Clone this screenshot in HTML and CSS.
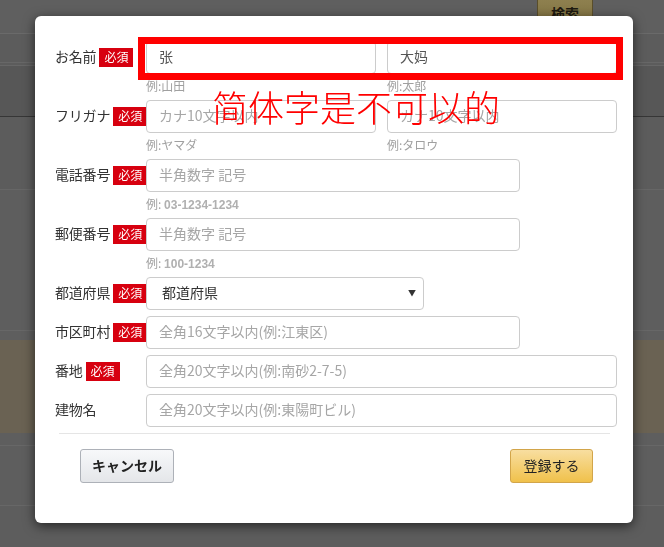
FILE: index.html
```html
<!DOCTYPE html>
<html lang="ja">
<head>
<meta charset="utf-8">
<title>住所登録</title>
<link rel="stylesheet" href="styles.css">
</head>
<body>
<div class="page">
  <div class="page-header"><span class="search-btn">検索</span></div>
  <div class="band b1"></div>
  <div class="band b2"></div>
  <div class="band b3"></div>
  <div class="band b4"></div>
  <div class="band b5"></div>
  <div class="band b6"></div>
  <div class="band b7"></div>
  <div class="band b8"></div>
  <div class="band b9"></div>
  <div class="band b10"></div>
</div>

<div class="backdrop">
  <div class="dialog">
    <div class="form">
      <div class="row">
        <div class="label"><span class="label-text">お名前</span><span class="req">必須</span></div>
        <div class="pair">
          <div class="col">
            <input class="input" type="text" value="张">
            <div class="hint">例:山田</div>
          </div>
          <div class="col">
            <input class="input" type="text" value="大妈">
            <div class="hint">例:太郎</div>
          </div>
        </div>
      </div>

      <div class="row">
        <div class="label"><span class="label-text">フリガナ</span><span class="req">必須</span></div>
        <div class="pair">
          <div class="col">
            <input class="input" type="text" placeholder="カナ10文字以内">
            <div class="hint">例:ヤマダ</div>
          </div>
          <div class="col">
            <input class="input" type="text" placeholder="カナ10文字以内">
            <div class="hint">例:タロウ</div>
          </div>
        </div>
      </div>

      <div class="row">
        <div class="label"><span class="label-text">電話番号</span><span class="req">必須</span></div>
        <div class="col">
          <input class="input w-md" type="text" placeholder="半角数字 記号">
          <div class="hint">例: <span class="num">03-1234-1234</span></div>
        </div>
      </div>

      <div class="row">
        <div class="label"><span class="label-text">郵便番号</span><span class="req">必須</span></div>
        <div class="col">
          <input class="input w-md" type="text" placeholder="半角数字 記号">
          <div class="hint">例: <span class="num">100-1234</span></div>
        </div>
      </div>

      <div class="row">
        <div class="label"><span class="label-text">都道府県</span><span class="req">必須</span></div>
        <div class="select-wrap">
          <select class="select">
            <option>都道府県</option>
          </select>
        </div>
      </div>

      <div class="row">
        <div class="label"><span class="label-text">市区町村</span><span class="req">必須</span></div>
        <input class="input w-md" type="text" placeholder="全角16文字以内(例:江東区)">
      </div>

      <div class="row">
        <div class="label"><span class="label-text">番地</span><span class="req">必須</span></div>
        <input class="input" type="text" placeholder="全角20文字以内(例:南砂2-7-5)">
      </div>

      <div class="row">
        <div class="label"><span class="label-text">建物名</span></div>
        <input class="input" type="text" placeholder="全角20文字以内(例:東陽町ビル)">
      </div>
    </div>

    <div class="divider"></div>

    <div class="footer">
      <button class="btn btn-cancel" type="button">キャンセル</button>
      <button class="btn btn-primary" type="button">登録する</button>
    </div>

    <div class="mark-box"></div>
    <div class="mark-text">简体字是不可以的</div>
  </div>
</div>
</body>
</html>
```

FILE: styles.css
```css
* {
  box-sizing: border-box;
}

html, body {
  margin: 0;
  padding: 0;
}

body {
  width: 664px;
  height: 547px;
  overflow: hidden;
  background: #5d5d5d;
  font-family: "Noto Sans CJK JP", "Noto Sans", sans-serif;
  font-size: 14px;
  color: #333;
}

/* ---------- dimmed page behind the modal ---------- */
.page {
  width: 664px;
}

.page-header {
  height: 34px;
  background: #5f5f5f;
  border-bottom: 1px solid #6a6a6a;
  display: flex;
  justify-content: flex-end;
  padding-right: 71px;
}

.search-btn {
  display: block;
  width: 56px;
  height: 32px;
  margin-top: -3px;
  background: linear-gradient(#8f8150, #7f703f);
  border: 1px solid #5a4e2a;
  border-radius: 3px;
  color: #1e1a10;
  font-weight: bold;
  font-size: 14px;
  line-height: 30px;
  text-align: center;
}

.band {
  background: #5c5c5c;
}

.b1 { height: 29px; border-bottom: 1px solid #676767; }
.b2 { height: 3px; border-bottom: 1px solid #676767; }
.b3 { height: 51px; background: #575757; border-bottom: 1px solid #363636; }
.b4 { height: 73px; border-bottom: 1px solid #666; }
.b5 { height: 141px; background: #5e5e5e; border-bottom: 1px solid #676767; }
.b6 { height: 9px; background: #5e5e5e; }
.b7 { height: 93px; background: #6a6253; }
.b8 { height: 13px; background: #5e5e5e; border-bottom: 1px solid #676767; }
.b9 { height: 60px; background: #5e5e5e; border-bottom: 1px solid #676767; }
.b10 { height: 60px; background: #5d5d5d; }

/* ---------- modal ---------- */
.backdrop {
  position: fixed;
  inset: 0;
  padding: 16px 0 0 35px;
}

.dialog {
  position: relative;
  width: 598px;
  background: #fff;
  border-radius: 6px;
  box-shadow: 0 3px 12px rgba(0, 0, 0, 0.6);
  padding: 25px 16px 40px 20px;
}

.form {
  display: flex;
  flex-direction: column;
  gap: 6px;
}

.row {
  display: grid;
  grid-template-columns: 91px 471px;
  align-items: start;
}

.label {
  height: 33px;
  display: flex;
  align-items: center;
  white-space: nowrap;
  font-size: 14px;
  color: #333;
}

.label-text {
  padding-bottom: 4px;
  letter-spacing: -0.2px;
}

.req {
  display: inline-block;
  margin-left: 3px;
  height: 19px;
  padding: 0 5px;
  background: #d7000f;
  color: #fff;
  font-size: 12px;
  line-height: 18px;
}

.pair {
  display: grid;
  grid-template-columns: 230px 230px;
  column-gap: 11px;
}

.col {
  display: flex;
  flex-direction: column;
}

.input {
  display: block;
  width: 100%;
  height: 33px;
  margin: 0;
  padding: 0 12px 3px;
  border: 1px solid #ccc;
  border-radius: 4px;
  background: #fff;
  font-family: "Noto Sans CJK JP", "Noto Sans", sans-serif;
  font-size: 14px;
  color: #555;
  outline: none;
}

.input::placeholder {
  color: #a6a6a6;
}

.w-md {
  width: 374px;
}

.hint {
  margin-top: 3px;
  height: 17px;
  line-height: 17px;
  font-size: 12px;
  color: #a0a0a0;
}

.num {
  color: #b0b0b0;
  font-weight: 600;
  font-family: "Liberation Sans", "Noto Sans", sans-serif;
}

.select-wrap {
  position: relative;
  width: 278px;
}

.select {
  display: block;
  width: 100%;
  height: 33px;
  margin: 0;
  padding: 0 20px 3px 15px;
  border: 1px solid #ccc;
  border-radius: 4px;
  background: #fff;
  font-family: "Noto Sans CJK JP", "Noto Sans", sans-serif;
  font-size: 14px;
  color: #333;
  appearance: none;
  -webkit-appearance: none;
  outline: none;
}

.select-wrap::after {
  content: "▼";
  position: absolute;
  right: 8px;
  top: 12px;
  font-size: 8px;
  line-height: 8px;
  color: #333;
  pointer-events: none;
}

.divider {
  height: 1px;
  margin: 6px 7px 0 4px;
  background: #e5e5e5;
}

.footer {
  display: flex;
  justify-content: space-between;
  padding: 15px 24px 0 25px;
}

.btn {
  height: 34px;
  margin: 0;
  padding: 0 0 2px;
  border-radius: 3px;
  font-family: "Noto Sans CJK JP", "Noto Sans", sans-serif;
  font-size: 14px;
  line-height: 30px;
  white-space: nowrap;
  text-align: center;
  color: #111;
  cursor: pointer;
}

.btn-cancel {
  width: 94px;
  font-weight: bold;
  color: #222;
  border: 1px solid #adb1b8;
  background: linear-gradient(#f7f8fa, #e4e6e9);
}

.btn-primary {
  width: 83px;
  border: 1px solid #d2a54a;
  background: linear-gradient(#f8dea0, #f0c14b);
  color: #222;
}

/* ---------- annotation overlay ---------- */
.mark-box {
  position: absolute;
  left: 103px;
  top: 21px;
  width: 485px;
  height: 43px;
  border: 7px solid #f00;
  pointer-events: none;
}

.mark-text {
  position: absolute;
  left: 177px;
  top: 72px;
  font-family: "Noto Sans CJK SC", "Noto Sans CJK JP", sans-serif;
  font-weight: 300;
  font-size: 36px;
  line-height: 36px;
  color: #f00;
  white-space: nowrap;
  pointer-events: none;
}
```
